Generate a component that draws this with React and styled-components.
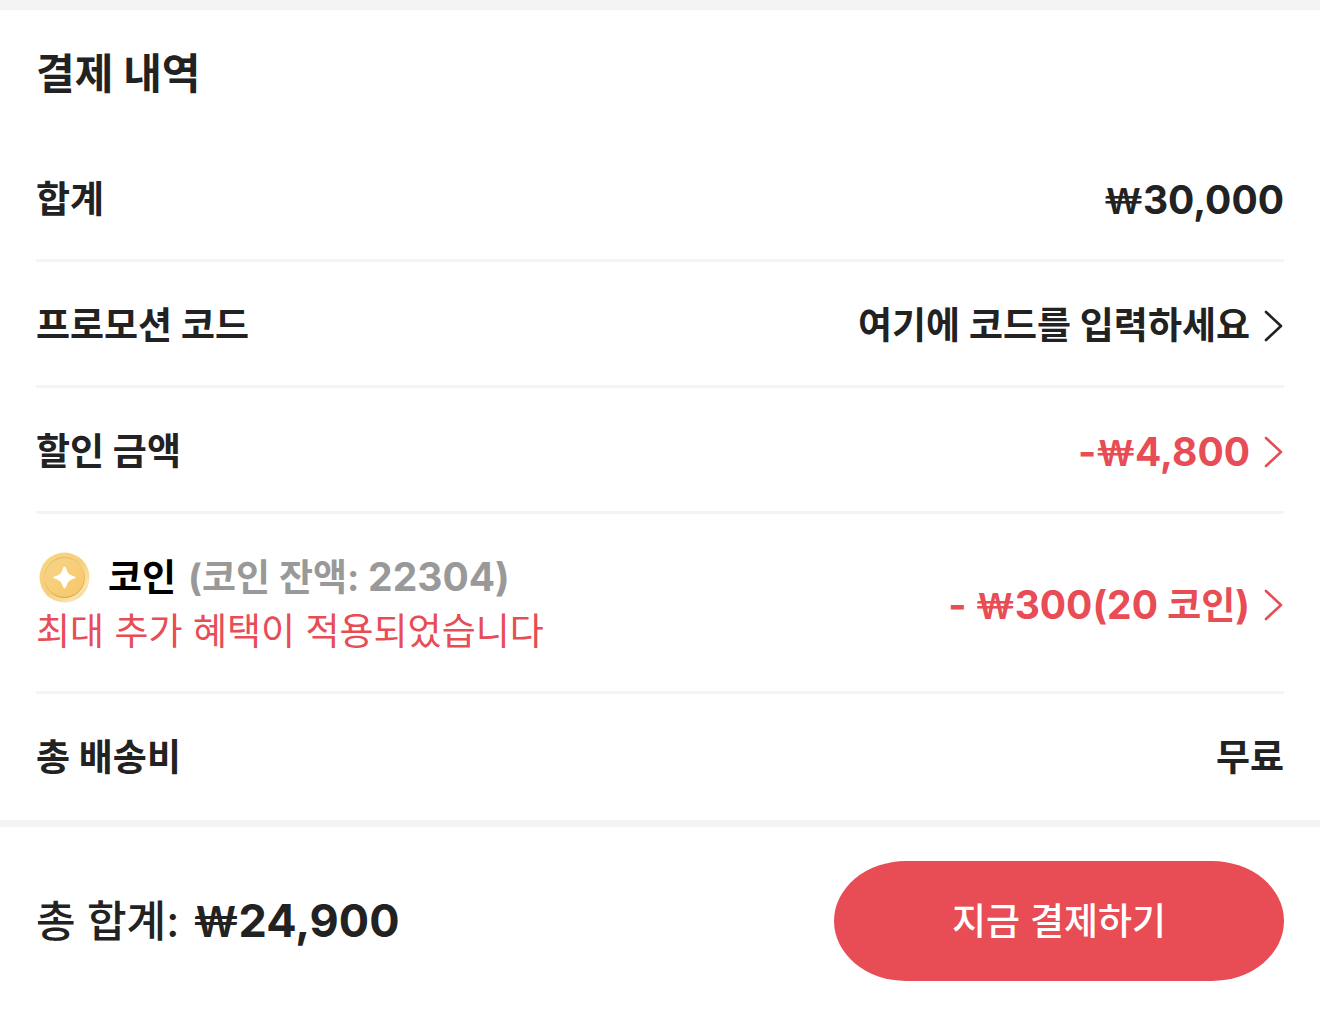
import React from "react";
import styled, { createGlobalStyle } from "styled-components";

const Global = createGlobalStyle`
  * { box-sizing: border-box; }
  body {
    margin: 0;
    background: #fff;
    color: #222;
    font-family: Inter, "Noto Sans CJK KR", sans-serif;
  }
`;

const Page = styled.main`
  border-top: 10px solid #f4f4f4;
`;

const Details = styled.section`
  padding: 0 36px;
`;

const Title = styled.h1`
  margin: 0;
  padding: 33px 0 31px;
  font-size: 42px;
  line-height: 62px;
  font-weight: 700;
`;

const Row = styled.div`
  display: flex;
  align-items: center;
  justify-content: space-between;
  padding: 38px 0 34px;
  font-size: 37px;
  line-height: 51px;
  font-weight: 700;
  border-bottom: 3px solid ${(p) => (p.$last ? "transparent" : "#f4f4f4")};
`;

const Label = styled.span`
  font-size: 37px;
`;

const Value = styled.span`
  font-size: ${(p) => (p.$text ? "37px" : "39px")};
`;

const Won = styled.span`
  font-family: Lato, sans-serif;
  font-size: ${(p) => (p.$large ? "42px" : "36px")};
  line-height: 1;
`;

const Unit = styled.span`
  font-size: 37px;
  line-height: 1;
`;

const RowButton = styled.button`
  display: flex;
  align-items: center;
  gap: 14px;
  padding: 0;
  border: 0;
  background: none;
  font: inherit;
  color: ${(p) => (p.$accent ? "#e84c55" : "#222")};
  cursor: pointer;
`;

const CoinInfo = styled.div`
  display: flex;
  flex-direction: column;
  gap: 3px;
`;

const CoinLine = styled.div`
  display: flex;
  align-items: center;
  gap: 12px;
  color: #000;
`;

const Muted = styled.span`
  color: #999;
`;

const Digits = styled.span`
  font-size: 39px;
  line-height: 1;
`;

const Note = styled.span`
  color: #e84c55;
  font-weight: 400;
`;

const Footer = styled.footer`
  display: flex;
  align-items: center;
  justify-content: space-between;
  padding: 34px 36px 36px;
  border-top: 7px solid #f4f4f4;
`;

const Total = styled.div`
  display: flex;
  align-items: center;
  gap: 14px;
  font-size: 43px;
  line-height: 60px;
  font-weight: 500;
`;

const Amount = styled.strong`
  font-size: 45px;
  font-weight: 700;
`;

const PayButton = styled.button`
  width: 450px;
  height: 120px;
  border: 0;
  border-radius: 72px / 60px;
  background: #e84c55;
  color: #fff;
  font: 500 37px/51px Inter, "Noto Sans CJK KR", sans-serif;
  cursor: pointer;
`;

const Chevron = () => (
  <svg width="20" height="32" viewBox="0 0 20 32" fill="none" aria-hidden="true">
    <path d="M2 2 17 16 2 30" stroke="currentColor" strokeWidth="2.6" strokeLinecap="round" strokeLinejoin="round" />
  </svg>
);

const Coin = () => (
  <svg width="60" height="51" viewBox="0 0 60 51" aria-hidden="true">
    <defs>
      <linearGradient id="coinRim" x1="0" y1="0" x2="1" y2="1">
        <stop offset="0" stopColor="#f8d77f" />
        <stop offset="0.5" stopColor="#f6cf7c" />
        <stop offset="0.8" stopColor="#fbe3a9" />
        <stop offset="1" stopColor="#f2bd62" />
      </linearGradient>
      <linearGradient id="coinFace" x1="0" y1="0" x2="1" y2="1">
        <stop offset="0" stopColor="#f7d48a" />
        <stop offset="1" stopColor="#f8c767" />
      </linearGradient>
      <linearGradient id="coinEdge" x1="0" y1="0" x2="0.3" y2="1">
        <stop offset="0" stopColor="#dfae60" />
        <stop offset="0.5" stopColor="#f3cc82" />
        <stop offset="1" stopColor="#dda04c" />
      </linearGradient>
    </defs>
    <circle cx="28.5" cy="25.5" r="25" fill="url(#coinRim)" />
    <circle cx="28.5" cy="25.5" r="20" fill="url(#coinFace)" stroke="url(#coinEdge)" />
    <path
      transform="translate(0 -0.5)"
      d="M28.5 15Q29.6 15 30.3 17.4Q31.8 23 37 24.4Q39.7 25.2 39.7 26Q39.7 26.8 37 27.6Q31.8 29 30.3 34.6Q29.6 37 28.5 37Q27.4 37 26.7 34.6Q25.2 29 20 27.6Q17.3 26.8 17.3 26Q17.3 25.2 20 24.4Q25.2 23 26.7 17.4Q27.4 15 28.5 15Z"
      fill="#fff"
    />
  </svg>
);

export default function App() {
  return (
    <>
      <Global />
      <Page>
        <Details>
          <Title>결제 내역</Title>
          <Row><Label>합계</Label><Value><Won>₩</Won>30,000</Value></Row>
          <Row>
            <Label>프로모션 코드</Label>
            <RowButton><Value $text>여기에 코드를 입력하세요</Value><Chevron /></RowButton>
          </Row>
          <Row>
            <Label>할인 금액</Label>
            <RowButton $accent><Value>-<Won>₩</Won>4,800</Value><Chevron /></RowButton>
          </Row>
          <Row>
            <CoinInfo>
              <CoinLine>
                <Coin />
                <span>코인</span>
                <Muted>(코인 잔액: <Digits>22304)</Digits></Muted>
              </CoinLine>
              <Note>최대 추가 혜택이 적용되었습니다</Note>
            </CoinInfo>
            <RowButton $accent>
              <Value>- <Won>₩</Won>300(20 <Unit>코인</Unit>)</Value>
              <Chevron />
            </RowButton>
          </Row>
          <Row $last><Label>총 배송비</Label><Value $text>무료</Value></Row>
        </Details>
        <Footer>
          <Total><span>총 합계:</span><Amount><Won $large>₩</Won>24,900</Amount></Total>
          <PayButton>지금 결제하기</PayButton>
        </Footer>
      </Page>
    </>
  );
}
